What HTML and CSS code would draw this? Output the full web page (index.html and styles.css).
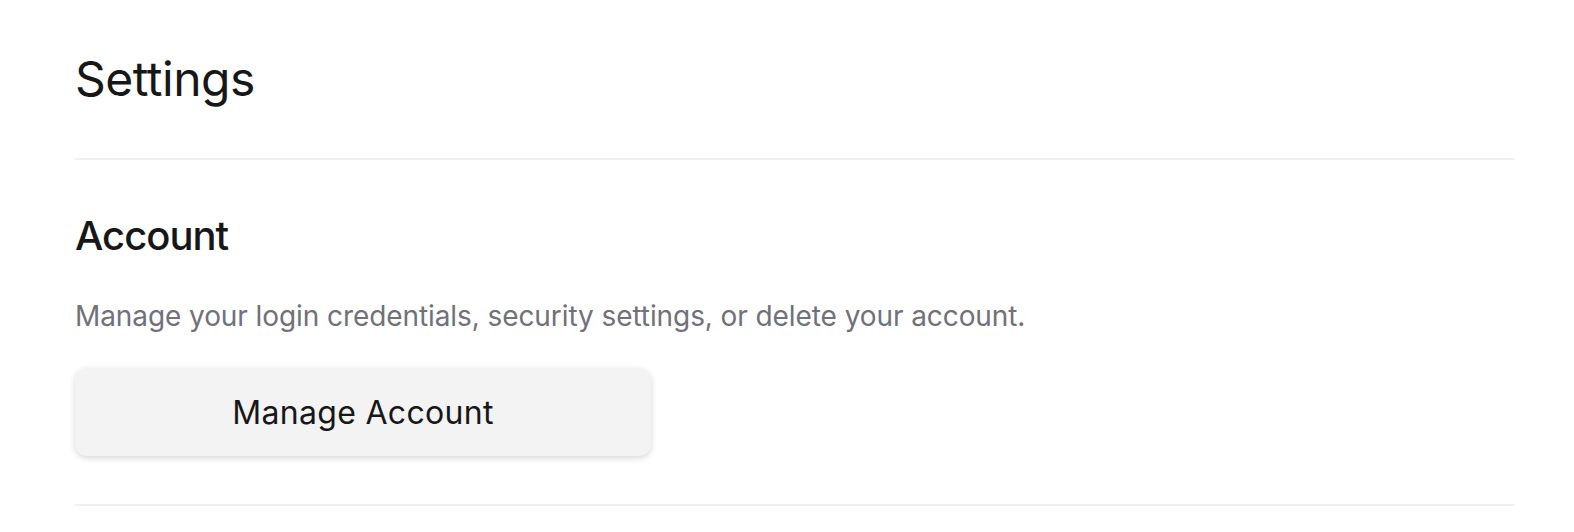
FILE: index.html
```html
<!DOCTYPE html>
<html lang="en">
<head>
<meta charset="utf-8">
<title>Settings</title>
<link rel="stylesheet" href="styles.css">
</head>
<body>
<main class="page">
  <header class="page-header">
    <h1 class="page-title">Settings</h1>
  </header>
  <section class="section">
    <h2 class="section-title">Account</h2>
    <p class="section-desc">Manage your login credentials, security settings, or delete your account.</p>
    <button class="btn" type="button">Manage Account</button>
  </section>
</main>
</body>
</html>
```

FILE: styles.css
```css
* { box-sizing: border-box; }
html, body { margin: 0; background: #ffffff; }
body {
  font-family: Inter, "Noto Sans", sans-serif;
  color: #171717;
}
.page {
  padding: 50px 59px 0 75px;
}
.page-header {
  padding-bottom: 50px;
  border-bottom: 2px solid #f0f0f0;
}
.page-title {
  margin: 0;
  font-size: 48px;
  font-weight: 400;
  letter-spacing: -0.01em;
  line-height: 58px;
}
.section {
  padding: 52px 0 48px;
  border-bottom: 2px solid #f0f0f0;
  display: flex;
  flex-direction: column;
  align-items: flex-start;
}
.section-title {
  margin: 0;
  font-size: 40px;
  font-weight: 500;
  letter-spacing: -0.025em;
  line-height: 48px;
}
.section-desc {
  margin: 39px 0 0;
  font-size: 28px;
  letter-spacing: -0.003em;
  line-height: 34px;
  color: #71717a;
}
.btn {
  margin-top: 35px;
  width: 576px;
  height: 88px;
  border: none;
  border-radius: 12px;
  background: #f3f3f3;
  box-shadow: 0 2px 6px rgba(0, 0, 0, 0.16);
  font-family: inherit;
  font-size: 32px;
  font-weight: 400;
  letter-spacing: 0.01em;
  color: #171717;
  cursor: pointer;
}
```
